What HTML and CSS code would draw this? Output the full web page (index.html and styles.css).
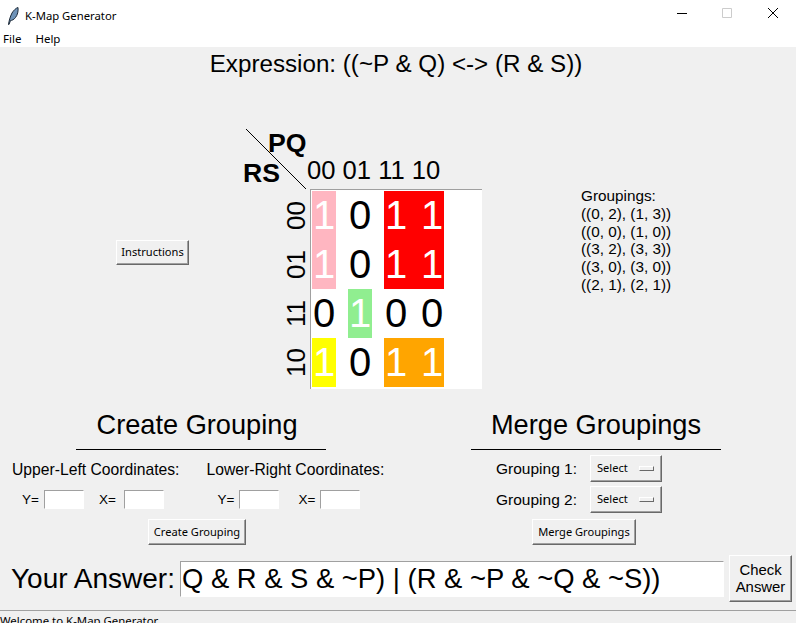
FILE: index.html
```html
<!DOCTYPE html>
<html lang="en">
<head>
    <meta charset="UTF-8">
    <meta name="viewport" content="width=device-width, initial-scale=1.0">
    <title>K-Map Generator</title>
    <link rel="stylesheet" href="styles.css">
</head>
<body>
    <div class="window">
        <div class="titlebar">
            <svg class="feather" width="12" height="18" viewBox="0 0 12 18">
                <path d="M1.5 17.5 C2 14 3 10 5 6 C6.5 3.5 9 1 11 0.5 C11.5 4 10.5 8 8.5 10.5 C7 12.5 5 13.5 3.5 13.5 L2 17.5 Z" fill="#6f93b8" stroke="#1d2a38" stroke-width="1"/>
            </svg>
            <span class="app-name">K-Map Generator</span>
            <div class="win-buttons">
                <svg width="12" height="12" viewBox="0 0 12 12"><path d="M0 5.5H10" stroke="#000" fill="none"/></svg>
                <svg width="12" height="12" viewBox="0 0 12 12"><path d="M0.5 0.5H9.5V9.5H0.5Z" stroke="#ccc" fill="none"/></svg>
                <svg width="12" height="12" viewBox="0 0 12 12"><path d="M1 0L11 10M11 0L1 10" stroke="#000" fill="none"/></svg>
            </div>
        </div>
        <div class="menubar">
            <span>File</span>
            <span>Help</span>
        </div>

        <div class="content">
            <div class="expression">Expression: ((~P &amp; Q) &lt;-&gt; (R &amp; S))</div>

            <div class="middle">
                <div class="instructions">
                    <button type="button" class="btn btn-instructions">Instructions</button>
                </div>

                <div class="map">
                    <div class="map-head">
                        <svg class="diagonal" width="60" height="60" viewBox="0 0 60 60"><path d="M0 0L60 60" stroke="#000" fill="none"/></svg>
                        <div class="var-pq">PQ</div>
                        <div class="head-row">
                            <div class="var-rs">RS</div>
                            <div class="col-labels">00 01 11 10</div>
                        </div>
                    </div>
                    <div class="map-body">
                        <div class="row-labels">
                            <div>00</div>
                            <div>01</div>
                            <div>11</div>
                            <div>10</div>
                        </div>
                        <div class="cells">
                            <div class="fill pink"></div>
                            <div class="fill red"></div>
                            <div class="fill green"></div>
                            <div class="fill yellow"></div>
                            <div class="fill orange"></div>

                            <div class="d on c1 r1">1</div>
                            <div class="d c2 r1">0</div>
                            <div class="d on c3 r1">1</div>
                            <div class="d on c4 r1">1</div>

                            <div class="d on c1 r2">1</div>
                            <div class="d c2 r2">0</div>
                            <div class="d on c3 r2">1</div>
                            <div class="d on c4 r2">1</div>

                            <div class="d c1 r3">0</div>
                            <div class="d on c2 r3">1</div>
                            <div class="d c3 r3">0</div>
                            <div class="d c4 r3">0</div>

                            <div class="d on c1 r4">1</div>
                            <div class="d c2 r4">0</div>
                            <div class="d on c3 r4">1</div>
                            <div class="d on c4 r4">1</div>
                        </div>
                    </div>
                </div>

                <div class="groupings">
                    <div>Groupings:</div>
                    <div>((0, 2), (1, 3))</div>
                    <div>((0, 0), (1, 0))</div>
                    <div>((3, 2), (3, 3))</div>
                    <div>((3, 0), (3, 0))</div>
                    <div>((2, 1), (2, 1))</div>
                </div>
            </div>

            <div class="panels">
                <div class="panel panel-create">
                    <h2 class="panel-title">Create Grouping</h2>
                    <div class="coords">
                        <div class="coord">
                            <div class="coord-label">Upper-Left Coordinates:</div>
                            <div class="coord-inputs">
                                <label class="lbl-y">Y=</label>
                                <input type="text" class="entry small">
                                <label class="lbl-x">X=</label>
                                <input type="text" class="entry small">
                            </div>
                        </div>
                        <div class="coord coord-lower">
                            <div class="coord-label">Lower-Right Coordinates:</div>
                            <div class="coord-inputs">
                                <label class="lbl-y">Y=</label>
                                <input type="text" class="entry small">
                                <label class="lbl-x wide">X=</label>
                                <input type="text" class="entry small">
                            </div>
                        </div>
                    </div>
                    <button type="button" class="btn btn-create">Create Grouping</button>
                </div>

                <div class="panel panel-merge">
                    <h2 class="panel-title">Merge Groupings</h2>
                    <div class="merge-row">
                        <span class="merge-label">Grouping 1:</span>
                        <div class="btn option-menu"><span class="option-text">Select</span><span class="indicator"></span></div>
                    </div>
                    <div class="merge-row">
                        <span class="merge-label">Grouping 2:</span>
                        <div class="btn option-menu"><span class="option-text">Select</span><span class="indicator"></span></div>
                    </div>
                    <button type="button" class="btn btn-merge">Merge Groupings</button>
                </div>
            </div>

            <div class="answer">
                <span class="answer-label">Your Answer:</span>
                <input type="text" class="entry answer-entry" value="Q &amp; R &amp; S &amp; ~P) | (R &amp; ~P &amp; ~Q &amp; ~S))">
                <button type="button" class="btn btn-check">Check<br>Answer</button>
            </div>
        </div>

        <div class="statusbar">Welcome to K-Map Generator.</div>
    </div>
</body>
</html>
```

FILE: styles.css
```css
* {
    box-sizing: border-box;
}
body {
    margin: 0;
    background-color: #f0f0f0;
    font-family: "Liberation Sans", Arial, sans-serif;
    color: #000;
}
.window {
    height: 623px;
    display: flex;
    flex-direction: column;
    overflow: hidden;
}

/* title bar and menu */
.titlebar {
    height: 31px;
    flex: none;
    background: #fff;
    display: flex;
    align-items: center;
    padding-left: 7px;
    font-family: "Noto Sans", sans-serif;
    font-size: 11.3px;
}
.feather {
    margin-right: 6px;
}
.win-buttons {
    margin-left: auto;
    display: flex;
    gap: 33px;
    padding-right: 17px;
    margin-top: -3px;
}
.menubar {
    height: 16px;
    flex: none;
    background: #fff;
    display: flex;
    gap: 14px;
    padding-left: 3px;
    font-family: "Noto Sans", sans-serif;
    font-size: 11.5px;
    line-height: 16px;
}

.content {
    flex: 1;
}
.expression {
    height: 34px;
    line-height: 34px;
    padding-right: 4px;
    text-align: center;
    font-size: 24.2px;
}

/* middle part with the map */
.middle {
    display: grid;
    grid-template-columns: 243px 239px 1fr;
    margin-top: 48px;
}
.instructions {
    padding: 111px 0 0 116px;
}
.map-head {
    position: relative;
    height: 60px;
}
.diagonal {
    position: absolute;
    left: 3px;
    top: 0;
}
.var-pq {
    height: 28px;
    line-height: 28px;
    padding-left: 25px;
    font-size: 26.67px;
    font-weight: bold;
}
.head-row {
    display: flex;
}
.var-rs {
    height: 32px;
    line-height: 32px;
    font-size: 26.67px;
    font-weight: bold;
}
.col-labels {
    margin-left: 27px;
    font-size: 25.6px;
    line-height: 26px;
    white-space: pre;
}
.map-body {
    display: grid;
    grid-template-columns: 67px 172px;
    height: 200px;
}
.row-labels {
    padding-top: 2px;
    display: grid;
    grid-template-rows: repeat(4, 49px);
    font-size: 26px;
}
.row-labels div {
    writing-mode: vertical-rl;
    transform: rotate(180deg);
    text-align: center;
    line-height: 24px;
    width: 24px;
    margin-left: 41px;
}
.cells {
    background: #fff;
    border-top: 1px solid #a0a0a0;
    border-left: 1px solid #a0a0a0;
    padding: 1px 0 0 1px;
    display: grid;
    grid-template-columns: 24px 12px 24px 12px 24px 12px 24px;
    grid-template-rows: repeat(4, 49px);
}
.fill.pink {
    grid-column: 1;
    grid-row: 1 / 3;
    background: #ffb6c1;
}
.fill.red {
    grid-column: 5 / 8;
    grid-row: 1 / 3;
    background: #f00;
}
.fill.green {
    grid-column: 3;
    grid-row: 3;
    background: #90ee90;
}
.fill.yellow {
    grid-column: 1;
    grid-row: 4;
    background: #ff0;
}
.fill.orange {
    grid-column: 5 / 8;
    grid-row: 4;
    background: #ffa500;
}
.d {
    font-size: 40px;
    line-height: 49px;
    text-align: center;
    justify-self: center;
}
.d.on {
    color: #fff;
}
.c1 { grid-column: 1; }
.c2 { grid-column: 3; }
.c3 { grid-column: 5; }
.c4 { grid-column: 7; }
.r1 { grid-row: 1; }
.r2 { grid-row: 2; }
.r3 { grid-row: 3; }
.r4 { grid-row: 4; }
.groupings {
    padding: 58px 0 0 99px;
    font-size: 15.3px;
    line-height: 17.8px;
}

/* tk style widgets */
.btn {
    display: block;
    margin: 0;
    padding: 0 0 2px;
    background: #f0f0f0;
    border: 1px solid;
    border-color: #fff #696969 #696969 #fff;
    box-shadow: inset -1px -1px 0 #a0a0a0;
    font-family: "Noto Sans", sans-serif;
    font-size: 11.1px;
    color: #000;
}
.btn-instructions {
    width: 73px;
    height: 25px;
}
.entry {
    display: block;
    margin: 0;
    background: #fff;
    border: 1px solid;
    border-color: #a0a0a0 #fff #fff #a0a0a0;
    font-family: "Liberation Sans", Arial, sans-serif;
}
.entry.small {
    width: 40px;
    height: 19px;
}

/* lower panels */
.panels {
    display: grid;
    grid-template-columns: 396px 400px;
    margin-top: 21px;
}
.panel-title {
    width: 250px;
    height: 40px;
    margin: 0;
    border-bottom: 1px solid #000;
    font-size: 27.2px;
    font-weight: normal;
    line-height: 30px;
    text-align: center;
}
.panel-create .panel-title {
    margin-left: 76px;
    padding-right: 8px;
}
.panel-merge .panel-title {
    margin-left: 75px;
}
.coords {
    display: flex;
    padding: 10px 0 0 12px;
    gap: 27px;
}
.coord-label {
    font-size: 15.7px;
    line-height: 20px;
    white-space: nowrap;
}
.coord-inputs {
    display: flex;
    align-items: center;
    margin-top: 10px;
    padding-left: 10px;
    font-size: 13.5px;
}
.lbl-y {
    width: 22px;
}
.lbl-x {
    width: 25px;
    margin-left: 15px;
}
.lbl-x.wide {
    width: 22px;
    margin-left: 19px;
}
.coord-lower .coord-inputs {
    padding-left: 11px;
}
.btn-create {
    width: 98px;
    height: 26px;
    margin: 10px 0 0 148px;
}
.merge-row {
    display: flex;
    align-items: center;
    padding-left: 100px;
    height: 27px;
    margin-top: 4px;
}
.merge-row:first-of-type {
    margin-top: 5px;
}
.merge-label {
    width: 94px;
    font-size: 15.5px;
}
.option-menu {
    width: 72px;
    height: 27px;
    display: flex;
    align-items: center;
    justify-content: space-between;
    padding: 0 7px 0 6px;
}
.option-text {
    margin-top: -2px;
}
.indicator {
    width: 15px;
    height: 5px;
    background: #f0f0f0;
    border: 1px solid;
    border-color: #fff #696969 #696969 #fff;
}
.btn-merge {
    width: 104px;
    height: 26px;
    margin: 6px 0 0 136px;
}

/* answer row */
.answer {
    display: flex;
    align-items: center;
    padding-left: 11px;
    margin-top: 10px;
    height: 47px;
}
.answer-label {
    font-size: 28px;
    width: 169px;
}
.answer-entry {
    width: 544px;
    height: 36px;
    padding: 0 2px 0 1px;
    font-size: 27.4px;
}
.btn-check {
    width: 63px;
    height: 47px;
    margin-left: 5px;
    padding: 1px 0 0;
    font-family: "Liberation Sans", Arial, sans-serif;
    font-size: 14.9px;
    line-height: 17.5px;
}

.statusbar {
    flex: none;
    height: 13px;
    border-top: 1px solid #a0a0a0;
    padding-top: 2px;
    font-family: "Noto Sans", sans-serif;
    font-size: 11.4px;
    line-height: 16px;
    white-space: nowrap;
}
```
